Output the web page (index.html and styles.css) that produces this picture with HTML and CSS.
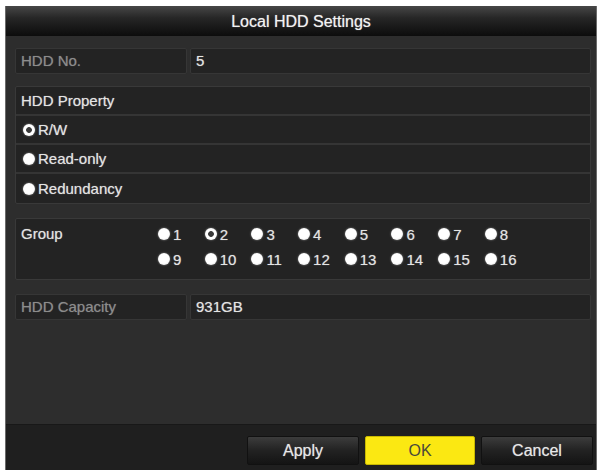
FILE: index.html
```html
<!DOCTYPE html>
<html>
<head>
<meta charset="utf-8">
<title>Local HDD Settings</title>
<link rel="stylesheet" href="styles.css">
</head>
<body>
<div class="dialog">
	<div class="title">Local HDD Settings</div>
	<div class="content">
		<div class="field">
			<div class="cell label dim">HDD No.</div>
			<div class="cell value">5</div>
		</div>

		<div class="box property">
			<div class="prow head">HDD Property</div>
			<div class="prow"><span class="radio on"></span>R/W</div>
			<div class="prow"><span class="radio"></span>Read-only</div>
			<div class="prow last"><span class="radio"></span>Redundancy</div>
		</div>

		<div class="box group">
			<div class="glabel">Group</div>
			<div class="groups">
				<div class="opt"><span class="radio"></span>1</div>
				<div class="opt"><span class="radio on"></span>2</div>
				<div class="opt"><span class="radio"></span>3</div>
				<div class="opt"><span class="radio"></span>4</div>
				<div class="opt"><span class="radio"></span>5</div>
				<div class="opt"><span class="radio"></span>6</div>
				<div class="opt"><span class="radio"></span>7</div>
				<div class="opt"><span class="radio"></span>8</div>
				<div class="opt"><span class="radio"></span>9</div>
				<div class="opt"><span class="radio"></span>10</div>
				<div class="opt"><span class="radio"></span>11</div>
				<div class="opt"><span class="radio"></span>12</div>
				<div class="opt"><span class="radio"></span>13</div>
				<div class="opt"><span class="radio"></span>14</div>
				<div class="opt"><span class="radio"></span>15</div>
				<div class="opt"><span class="radio"></span>16</div>
			</div>
		</div>

		<div class="field">
			<div class="cell label dim">HDD Capacity</div>
			<div class="cell value">931GB</div>
		</div>
	</div>
	<div class="buttons">
		<button class="btn">Apply</button>
		<button class="btn ok">OK</button>
		<button class="btn">Cancel</button>
	</div>
</div>
</body>
</html>
```

FILE: styles.css
```css
* {
	box-sizing: border-box;
}
body {
	margin: 0;
	background-color: #fff;
	font-family: "Liberation Sans", Arial, sans-serif;
	font-size: 15px;
	color: #e4e4e4;
}
.dialog {
	margin: 6px 0 0 5px;
	width: 592px;
	height: 464px;
	background-color: #2d2d2d;
	border-left: 1px solid #6a6a6a;
	border-right: 1px solid #6a6a6a;
	display: flex;
	flex-direction: column;
}
.title {
	height: 30px;
	line-height: 31px;
	text-align: center;
	font-size: 16px;
	color: #f2f2f2;
	background: linear-gradient(#474747, #262626 40%, #0c0c0c);
	text-shadow: 0 0 1px rgba(255,255,255,0.6);
}
.content {
	flex: 1;
	padding: 12px 5px 0 9px;
}
.field {
	display: grid;
	grid-template-columns: 172px 1fr;
	gap: 3px;
	height: 26px;
	margin-bottom: 12px;
}
.cell {
	background-color: #232323;
	border: 1px solid #363636;
	border-radius: 2px;
	line-height: 24px;
	padding-left: 5px;
	text-shadow: 0 0 1px rgba(255,255,255,0.5);
}
.dim {
	color: #8c8c8c;
	text-shadow: 0 0 1px rgba(255,255,255,0.3);
}
.box {
	background-color: #232323;
	border: 1px solid #393939;
	border-radius: 2px;
	text-shadow: 0 0 1px rgba(255,255,255,0.5);
}
.property {
	margin-bottom: 14px;
}
.prow {
	height: 29px;
	display: flex;
	align-items: center;
	padding-left: 5px;
	border-bottom: 2px solid #353535;
}
.prow.last {
	border-bottom: none;
}
.prow .radio {
	margin-right: 3px;
	margin-left: 2px;
}
.radio {
	display: inline-block;
	width: 12px;
	height: 12px;
	border-radius: 50%;
	background: radial-gradient(circle at 45% 40%, #fff 55%, #d8d8d8);
	box-shadow: 0 0 2px rgba(255,255,255,0.5);
	flex: none;
}
.radio.on {
	background: radial-gradient(circle, #3a3a3a 0 2.5px, #fff 3.2px);
}
.group {
	display: flex;
	height: 62px;
	padding: 6px 0 0 5px;
	margin-bottom: 14px;
}
.glabel {
	width: 137px;
	line-height: 18px;
}
.groups {
	display: grid;
	grid-template-columns: repeat(8, 46.7px);
	grid-auto-rows: 18px;
	align-content: start;
	row-gap: 7px;
}
.opt {
	display: flex;
	align-items: center;
	gap: 3px;
}
.buttons {
	height: 46px;
	background-color: #1f1f1f;
	border-top: 1px solid #181818;
	display: flex;
	justify-content: flex-end;
	gap: 6px;
	padding: 11px 3px 0 0;
}
.btn {
	width: 112px;
	height: 29px;
	border: 1px solid #111;
	border-radius: 2px;
	background: linear-gradient(#3c3c3c, #222 50%, #141414);
	color: #e8e8e8;
	font-family: "Liberation Sans", Arial, sans-serif;
	font-size: 16px;
	text-shadow: 0 0 1px rgba(255,255,255,0.5);
}
.btn.ok {
	width: 110px;
	background: #fbe812;
	border-color: #c8b800;
	color: #4a4a3a;
	text-shadow: none;
}
```
